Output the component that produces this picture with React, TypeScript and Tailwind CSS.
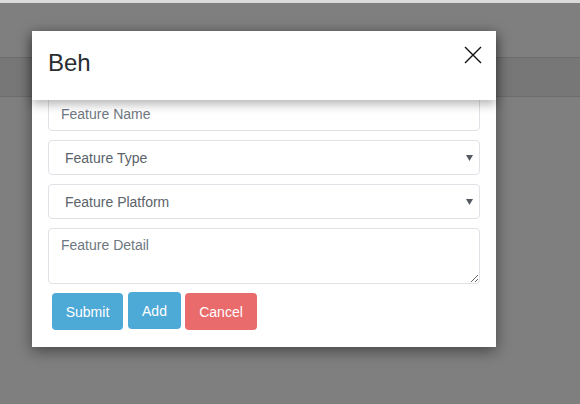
import React from 'react'

function Caret() {
  return (
    <svg width="7" height="6" viewBox="0 0 7 6" className="shrink-0">
      <path d="M0 0 H7 L3.5 6 Z" fill="#555b61" />
    </svg>
  )
}

function SelectBox({ label }: { label: string }) {
  return (
    <div className="flex h-[35px] items-center justify-between rounded-[4px] border border-[#dfe2e6] bg-white pl-[16px] pr-[6px] pt-[1px] text-[14px] text-[#5b636b]">
      <span>{label}</span>
      <Caret />
    </div>
  )
}

export default function App() {
  return (
    <div
      className="relative h-[404px] w-[580px] overflow-hidden bg-[#7f7f7f]"
      style={{ fontFamily: '"Liberation Sans", Arial, sans-serif' }}
    >
      {/* page behind backdrop */}
      <div className="h-[3px] bg-[#dadada]" />
      <div className="mt-[54px] h-[40px] border-y border-[#6c6c6c] bg-[#777777]" />

      {/* modal */}
      <div className="absolute left-[32px] top-[31px] flex w-[464px] flex-col bg-white shadow-[0_4px_14px_rgba(0,0,0,0.45)]">
        <div className="relative z-10 flex h-[69px] items-start justify-between bg-white pl-[16px] pr-[14px] shadow-[0_4px_10px_rgba(0,0,0,0.3)]">
          <h1 className="pt-[17px] text-[24px] leading-[30px] text-[#2a2d31]">Beh</h1>
          <button className="mt-[15px]">
            <svg width="18" height="18" viewBox="0 0 18 18">
              <path d="M1 1 L17 17 M17 1 L1 17" stroke="#111" strokeWidth="1.4" />
            </svg>
          </button>
        </div>

        <div className="-mt-[4px] flex flex-col gap-[9px] px-[16px] pb-[17px]">
          <div className="flex h-[35px] items-center rounded-[4px] border border-[#dfe2e6] bg-white pl-[12px] pt-[1px] text-[14px] text-[#6f777f]">
            Feature Name
          </div>
          <SelectBox label="Feature Type" />
          <SelectBox label="Feature Platform" />
          <textarea
            placeholder="Feature Detail"
            className="h-[56px] resize-y rounded-[4px] border border-[#dfe2e6] bg-white px-[12px] pt-[6px] text-[14px] leading-[20px] outline-none placeholder:text-[#6f777f]"
          />
          <div className="flex items-start pl-[4px]">
            <button className="mr-[5px] h-[37px] w-[71px] rounded-[4px] bg-[#4da9d6] pt-[2px] text-[14px] text-white">
              Submit
            </button>
            <button className="-mt-[1px] mr-[4px] h-[37px] w-[53px] rounded-[4px] bg-[#4da9d6] pt-[1px] text-[14px] text-white">
              Add
            </button>
            <button className="h-[37px] w-[72px] rounded-[4px] bg-[#e96b6b] pt-[2px] text-[14px] text-white">
              Cancel
            </button>
          </div>
        </div>
      </div>
    </div>
  )
}
